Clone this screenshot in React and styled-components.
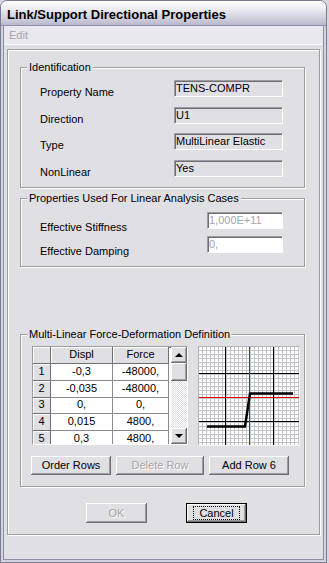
import React from 'react';
import styled, { createGlobalStyle } from 'styled-components';

const face = '#E0DFE3';
const shadow = '#9D9DA1';
const dkShadow = '#6F6E73';
const grayText = '#A5A4A9';

const raised = `
  box-shadow: inset -1px -1px ${dkShadow}, inset 1px 1px #fff,
    inset -2px -2px ${shadow}, inset 2px 2px ${face};
`;

const sunken = `
  border-style: solid;
  border-width: 1px;
  border-color: ${shadow} #fff #fff ${shadow};
  box-shadow: inset 1px 1px ${dkShadow};
`;

const GlobalStyle = createGlobalStyle`
  html, body {
    margin: 0;
    padding: 0;
    background: #d6d6de;
  }
  body {
    font-family: "Liberation Sans", Arial, sans-serif;
    font-size: 11px;
    color: #000;
  }
`;

const Window = styled.div`
  width: 327px;
  height: 563px;
  box-sizing: border-box;
  display: flex;
  flex-direction: column;
  border: 1px solid #7b7b92;
  border-radius: 7px 7px 0 0;
  background: #d3d3df;
  overflow: hidden;
`;

const TitleBar = styled.div`
  flex: none;
  height: 25px;
  box-sizing: border-box;
  padding: 3px 0 0 6px;
  display: flex;
  align-items: center;
  background: linear-gradient(#ffffff, #ebebf2 35%, #cdcddc 75%, #b9b9cc);
  border-bottom: 1px solid #8e8ea6;
  font-weight: bold;
  font-size: 13px;
`;

const Frame = styled.div`
  flex: 1;
  display: flex;
  padding: 0 2px 2px;
`;

const Client = styled.div`
  flex: 1;
  display: flex;
  flex-direction: column;
  background: ${face};
  border: 1px solid #8e8ea4;
  border-top: none;
`;

const MenuBar = styled.div`
  height: 18px;
  display: flex;
  align-items: center;
  padding-left: 5px;
  background: #e8e8ee;
  border-bottom: 1px solid #f8f8fa;
  color: ${grayText};
`;

const Content = styled.div`
  padding: 4px 3px 0;
`;

const Panel = styled.div`
  display: flex;
  flex-direction: column;
  padding: 11px 14px 11px 12px;
  border: 1px solid ${shadow};
  box-shadow: inset 1px 1px #fff, 1px 1px #fff;
`;

const Group = styled.fieldset`
  margin: ${(p) => p.$top || 0}px 0 0;
  padding: 0;
  min-width: 0;
  border: 1px solid ${shadow};
  box-shadow: inset 1px 1px #fff, 1px 1px #fff;
`;

const Legend = styled.legend`
  margin-left: 6px;
  padding: 0 2px;
  line-height: 13px;
  background: ${face};
`;

const GroupBody = styled.div`
  padding: ${(p) => p.$pad};
`;

const FieldGrid = styled.div`
  display: grid;
  grid-template-columns: ${(p) => p.$cols};
  grid-auto-rows: 17px;
  row-gap: ${(p) => p.$gap}px;
`;

const Label = styled.div`
  line-height: 17px;
  padding-top: ${(p) => p.$drop}px;
  white-space: nowrap;
`;

const TextBox = styled.div`
  box-sizing: border-box;
  height: 17px;
  padding-left: 1px;
  line-height: 14px;
  white-space: nowrap;
  background: ${(p) => (p.$disabled ? '#fff' : face)};
  color: ${(p) => (p.$disabled ? grayText : '#000')};
  ${sunken}
`;

const Definition = styled.div`
  display: flex;
  gap: 10px;
`;

const TableFrame = styled.div`
  width: 156px;
  height: 99px;
  box-sizing: border-box;
  display: flex;
  margin-top: -1px;
  background: #fff;
  ${sunken}
`;

const Grid = styled.div`
  flex: 1;
  overflow: hidden;
  display: grid;
  grid-template-columns: 18px 62px 56px;
  grid-template-rows: 17px;
  grid-auto-rows: 16.8px;
  align-content: start;
`;

const HeadCell = styled.div`
  box-sizing: border-box;
  display: flex;
  align-items: center;
  justify-content: center;
  padding-bottom: 2px;
  line-height: 12px;
  background: ${face};
  border-right: 1px solid ${dkShadow};
  border-bottom: 1px solid ${dkShadow};
  box-shadow: inset 1px 1px #fff;
`;

const DataCell = styled.div`
  box-sizing: border-box;
  display: flex;
  align-items: center;
  justify-content: center;
  padding-bottom: 2px;
  line-height: 12px;
  background: #fff;
  border-right: 1px solid #8c8c90;
  border-bottom: 1px solid #8c8c90;
`;

const ScrollBar = styled.div`
  width: 16px;
  flex: none;
  display: flex;
  flex-direction: column;
`;

const ScrollButton = styled.div`
  height: 16px;
  display: flex;
  align-items: center;
  justify-content: center;
  background: ${face};
  ${raised}
`;

const Arrow = styled.div`
  width: 0;
  height: 0;
  border-left: 4px solid transparent;
  border-right: 4px solid transparent;
  ${(p) => (p.$down ? 'border-top: 4px solid #000;' : 'border-bottom: 4px solid #000;')}
`;

const Thumb = styled.div`
  height: 18px;
  background: ${face};
  ${raised}
`;

const Track = styled.div`
  flex: 1;
  background-color: #fff;
  background-image: repeating-conic-gradient(${face} 0 25%, #fff 0 50%);
  background-size: 2px 2px;
`;

const GraphBox = styled.div`
  width: 102px;
  height: 100px;
  box-sizing: border-box;
  margin-top: -1px;
  border: 1px solid #b4b4b8;
  border-right-color: #f4f4f6;
  border-bottom-color: #f4f4f6;
  background: #fff;
  svg {
    display: block;
  }
`;

const ButtonRow = styled.div`
  display: flex;
  gap: ${(p) => p.$gap}px;
  margin: ${(p) => p.$margin};
`;

const Button = styled.div`
  box-sizing: border-box;
  width: ${(p) => p.$w}px;
  height: ${(p) => p.$h || 19}px;
  display: flex;
  align-items: center;
  justify-content: center;
  background: ${face};
  color: ${(p) => (p.$disabled ? grayText : '#000')};
  text-shadow: ${(p) => (p.$disabled ? '1px 1px #fff' : 'none')};
  ${raised}
  ${(p) => p.$default && 'border: 1px solid #000;'}
`;

const FocusRect = styled.span`
  outline: 1px dotted #000;
  outline-offset: 0;
  padding: 0 5px;
  line-height: 12px;
`;

const fields = [
  ['Property Name', 'TENS-COMPR'],
  ['Direction', 'U1'],
  ['Type', 'MultiLinear Elastic'],
  ['NonLinear', 'Yes'],
];

const linear = [
  ['Effective Stiffness', '1,000E+11'],
  ['Effective Damping', '0,'],
];

const rows = [
  ['-0,3', '-48000,'],
  ['-0,035', '-48000,'],
  ['0,', '0,'],
  ['0,015', '4800,'],
  ['0,3', '4800,'],
];

const Chart = () => {
  const fine = [];
  for (let v = 3; v < 100; v += 4) fine.push(v);
  return (
    <svg width="100" height="98" viewBox="0 0 100 98">
      {fine.map((v) => (
        <g key={v} stroke="#c4c4c8" strokeWidth="1">
          <line x1={v + 0.5} y1="0" x2={v + 0.5} y2="98" />
          <line x1="0" y1={v + 0.5} x2="100" y2={v + 0.5} />
        </g>
      ))}
      <g stroke="#000" strokeWidth="1">
        <line x1="26.5" y1="0" x2="26.5" y2="98" />
        <line x1="74.5" y1="0" x2="74.5" y2="98" />
        <line x1="0" y1="26.5" x2="100" y2="26.5" />
        <line x1="0" y1="74.5" x2="100" y2="74.5" />
      </g>
      <g stroke="#e00000" strokeWidth="1">
        <line x1="50.5" y1="0" x2="50.5" y2="98" />
        <line x1="0" y1="50.5" x2="100" y2="50.5" />
      </g>
      <polyline
        points="8,79.5 46,79.5 51,46.5 94,46.5"
        fill="none"
        stroke="#000"
        strokeWidth="2.5"
      />
    </svg>
  );
};

const App = () => (
  <>
    <GlobalStyle />
    <Window>
      <TitleBar>Link/Support Directional Properties</TitleBar>
      <Frame>
        <Client>
          <MenuBar>Edit</MenuBar>
          <Content>
            <Panel>
              <Group>
                <Legend>Identification</Legend>
                <GroupBody $pad="6px 0 10px 19px">
                  <FieldGrid $cols="134px 109px" $gap={9.67}>
                    {fields.map(([label, value]) => (
                      <React.Fragment key={label}>
                        <Label $drop={4}>{label}</Label>
                        <TextBox>{value}</TextBox>
                      </React.Fragment>
                    ))}
                  </FieldGrid>
                </GroupBody>
              </Group>

              <Group $top={4}>
                <Legend>Properties Used For Linear Analysis Cases</Legend>
                <GroupBody $pad="7px 0 13px 19px">
                  <FieldGrid $cols="167px 76px" $gap={7}>
                    {linear.map(([label, value]) => (
                      <React.Fragment key={label}>
                        <Label $drop={7}>{label}</Label>
                        <TextBox $disabled>{value}</TextBox>
                      </React.Fragment>
                    ))}
                  </FieldGrid>
                </GroupBody>
              </Group>

              <Group $top={61}>
                <Legend>Multi-Linear Force-Deformation Definition</Legend>
                <GroupBody $pad="6px 0 11px 11px">
                  <Definition>
                    <TableFrame>
                      <Grid>
                        <HeadCell />
                        <HeadCell>Displ</HeadCell>
                        <HeadCell>Force</HeadCell>
                        {rows.map(([d, f], i) => (
                          <React.Fragment key={i}>
                            <HeadCell>{i + 1}</HeadCell>
                            <DataCell>{d}</DataCell>
                            <DataCell>{f}</DataCell>
                          </React.Fragment>
                        ))}
                      </Grid>
                      <ScrollBar>
                        <ScrollButton>
                          <Arrow />
                        </ScrollButton>
                        <Thumb />
                        <Track />
                        <ScrollButton>
                          <Arrow $down />
                        </ScrollButton>
                      </ScrollBar>
                    </TableFrame>
                    <GraphBox>
                      <Chart />
                    </GraphBox>
                  </Definition>
                  <ButtonRow $gap={5} $margin="10px 0 0 -1px">
                    <Button $w={80}>Order Rows</Button>
                    <Button $w={88} $disabled>Delete Row</Button>
                    <Button $w={80}>Add Row 6</Button>
                  </ButtonRow>
                </GroupBody>
              </Group>

              <ButtonRow $gap={39} $margin="16px 0 0 66px">
                <Button $w={61} $h={20} $disabled>OK</Button>
                <Button $w={61} $h={20} $default>
                  <FocusRect>Cancel</FocusRect>
                </Button>
              </ButtonRow>
            </Panel>
          </Content>
        </Client>
      </Frame>
    </Window>
  </>
);

export default App;
